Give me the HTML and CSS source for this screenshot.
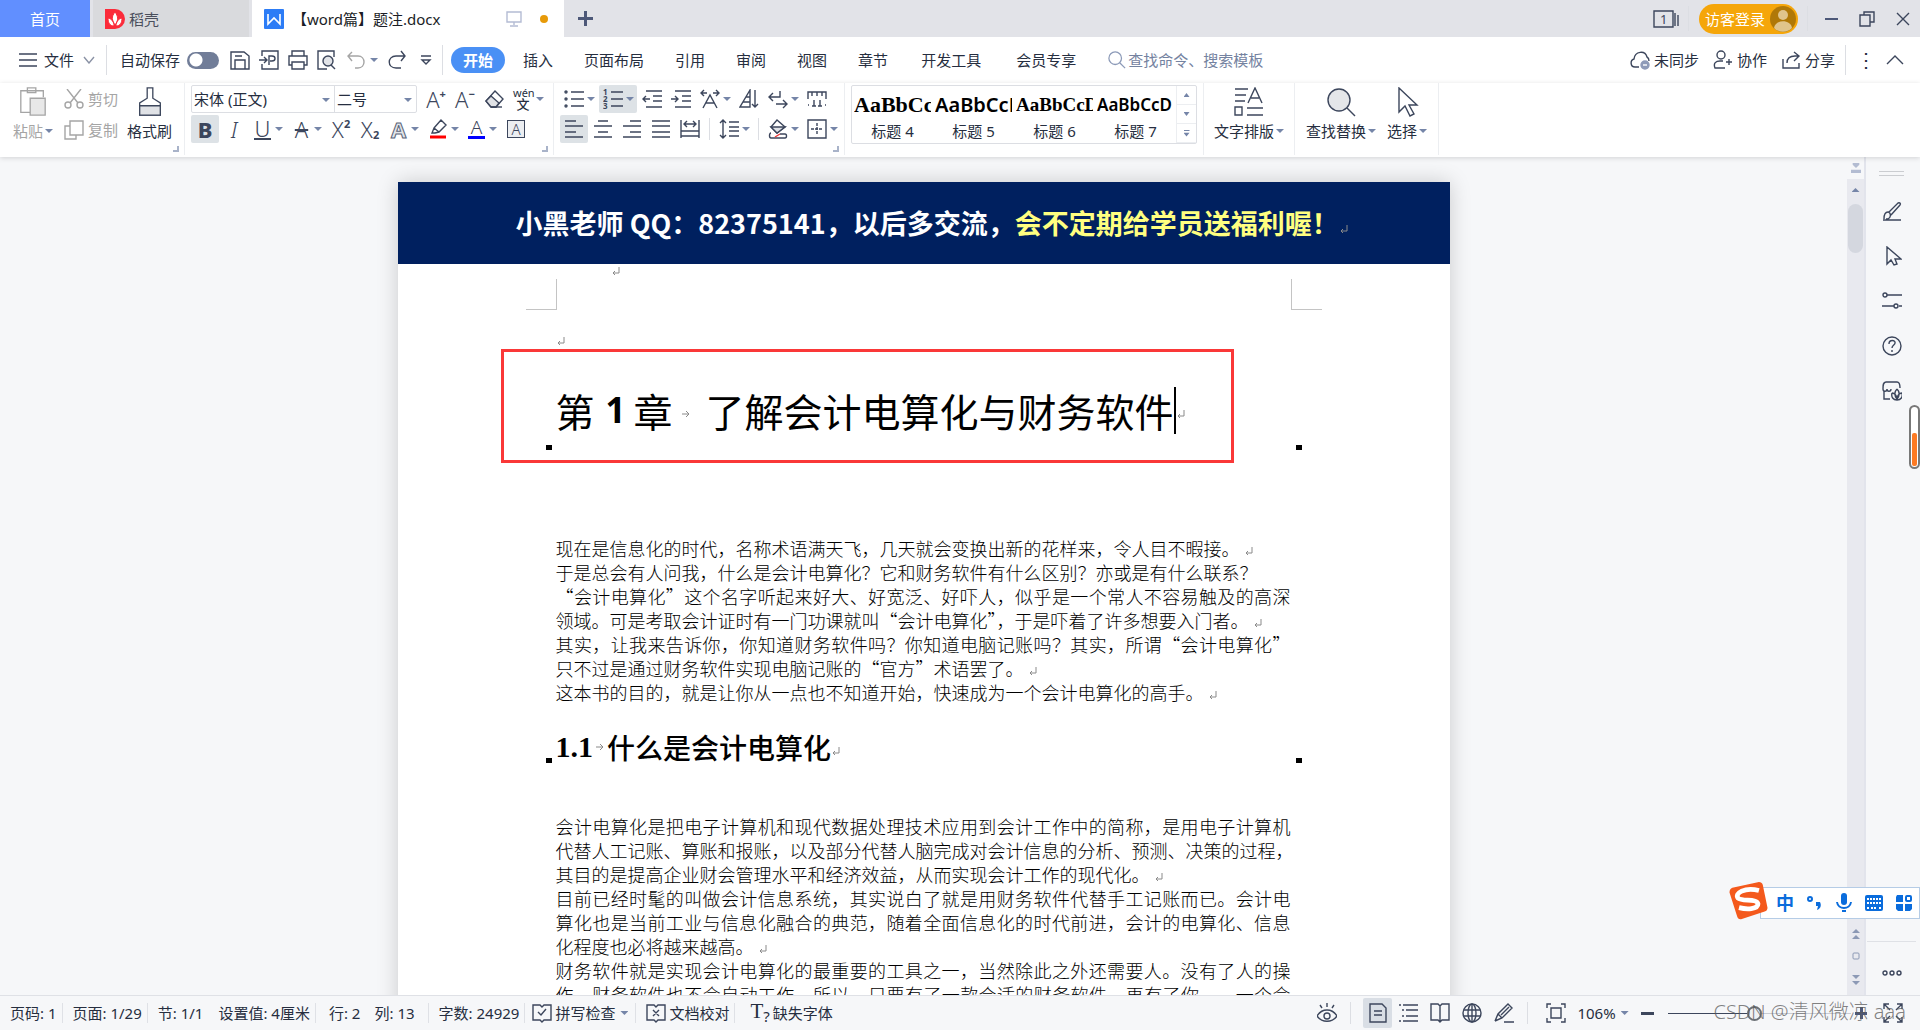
FILE: index.html
```html
<!DOCTYPE html>
<html lang="zh-CN">
<head>
    <meta charset="UTF-8">
    <meta name="viewport" content="width=device-width, initial-scale=1.0">
    <title>【word篇】题注.docx</title>
    <link rel="stylesheet" href="styles.css">
</head>
<body>
    <!-- Icon sprite -->
    <svg class="sprite" aria-hidden="true">
        <symbol id="i-menu" viewBox="0 0 20 20"><path d="M1 4h18M1 10h18M1 16h18"/></symbol>
        <symbol id="i-down" viewBox="0 0 12 8"><path d="M1 1l5 6 5-6"/></symbol>
        <symbol id="i-up" viewBox="0 0 18 12"><path d="M1 10l8-8 8 8"/></symbol>
        <symbol id="i-save" viewBox="0 0 20 20"><path d="M1 2h13l5 4v13H1zM5 19v-9h10v9M5 6h7"/></symbol>
        <symbol id="i-export" viewBox="0 0 20 20"><path d="M3 6V1h16v18H3v-5M0 10h8M5 7l3 3-3 3M10 15V6h3c4 0 4 5 0 5h-2"/></symbol>
        <symbol id="i-print" viewBox="0 0 20 20"><path d="M4 6V1h12v5M4 15H1V6h18v9h-3M4 12h12v7H4z"/></symbol>
        <symbol id="i-preview" viewBox="0 0 20 20"><path d="M17 7V1H1v18h9"/><circle cx="11" cy="11" r="5" fill="#e2e4e8"/><path d="M14 15l4 4"/></symbol>
        <symbol id="i-undo" viewBox="0 0 20 20"><path d="M6 2L2 6l4 5M2 6h10c8 0 8 12 0 12H9"/></symbol>
        <symbol id="i-redo" viewBox="0 0 20 20"><path d="M14 1l4 5-4 5M18 6H9c-9 0-9 12 0 12h5"/></symbol>
        <symbol id="i-more" viewBox="0 0 12 12"><path d="M1 2h10M2 6h8l-4 4z"/></symbol>
        <symbol id="i-search" viewBox="0 0 20 20"><circle cx="8" cy="8" r="7"/><path d="M13 13l6 6"/></symbol>
        <symbol id="i-cloud" viewBox="0 0 20 20"><path d="M9 17H5c-5 0-5-7-1-8 1-8 11-9 13-2 2 1 2 3 2 4"/><circle cx="15" cy="15" r="4" fill="#8f9bb8" stroke="#8f9bb8"/><path d="M13 15h4" stroke="#fff"/></symbol>
        <symbol id="i-team" viewBox="0 0 20 20"><circle cx="8" cy="5" r="4"/><path d="M12 18H2c-2-5 1-7 5-7h3M13 12h6M16 9v6"/></symbol>
        <symbol id="i-share" viewBox="0 0 20 20"><path d="M2 9v9h16v-5M6 13c0-5 3-7 8-7h3M13 2l5 4-5 5"/></symbol>
        <symbol id="i-paste" viewBox="0 0 30 32"><path d="M12 27H2V4h24v7M9 4V1h9v5H9z"/><path d="M12 12h16v18H12z" fill="#e8e8e8"/></symbol>
        <symbol id="i-cut" viewBox="0 0 20 20"><path d="M3 0l11 14M17 0L6 14"/><circle cx="4" cy="16" r="3"/><circle cx="16" cy="16" r="3"/></symbol>
        <symbol id="i-copy" viewBox="0 0 20 20"><path d="M6 6H1v13h11v-4M6 1h13v14H6z"/></symbol>
        <symbol id="i-brush" viewBox="0 0 26 32"><path d="M10 1h6v11l8 5v13H2V17l8-5z"/><path d="M2 20h22v10H2z" fill="#e0e2e6"/></symbol>
        <symbol id="i-eraser" viewBox="0 0 20 20"><path d="M11 2l8 8-7 8H7l-5-6z"/><path d="M7 7l8 7-3 4H7l-5-6z" fill="#e0e2e6"/><path d="M7 18h11"/></symbol>
        <symbol id="i-marker" viewBox="0 0 20 20"><path d="M6 9l7-8 5 5-7 7-4 1-3 0zM6 9l5 4"/><path d="M2 18h16" stroke="#f00" stroke-width="3"/></symbol>
        <symbol id="i-bullets" viewBox="0 0 20 20"><circle cx="2" cy="3" r="1"/><circle cx="2" cy="10" r="1"/><circle cx="2" cy="17" r="1"/><path d="M7 3h13M7 10h13M7 17h13"/></symbol>
        <symbol id="i-outdent" viewBox="0 0 20 20"><path d="M4 2h16M11 7h9M11 12h9M4 18h16M8 10H1M4 7l-3 3 3 3"/></symbol>
        <symbol id="i-indent" viewBox="0 0 20 20"><path d="M4 2h16M11 7h9M11 12h9M4 18h16M0 10h7M4 7l3 3-3 3"/></symbol>
        <symbol id="i-scale" viewBox="0 0 20 20"><path d="M7 4H1M4 1L1 4l3 3M13 4h6M16 1l3 3-3 3M3 19L10 6l7 13M6 14h8"/></symbol>
        <symbol id="i-sort" viewBox="0 0 20 20"><path d="M11 1L1 18h10zM11 8H7M11 13H4M16 1v17M13 15l3 3 3-3"/></symbol>
        <symbol id="i-return" viewBox="0 0 20 20"><path d="M12 2v6H1M5 4L1 8l4 4M8 15h11M15 11l4 4-4 4"/></symbol>
        <symbol id="i-ruler" viewBox="0 0 20 20"><path d="M1 10V3h18v7M5 3v4M10 3v4M15 3v4M1 16h1M18 16h1M7 11v6M5 17h4M13 11v6M11 17h4"/></symbol>
        <symbol id="i-left" viewBox="0 0 20 20"><path d="M1 2h11M1 7h18M1 13h11M1 18h18"/></symbol>
        <symbol id="i-center" viewBox="0 0 20 20"><path d="M5 2h10M1 7h18M5 13h10M1 18h18"/></symbol>
        <symbol id="i-right" viewBox="0 0 20 20"><path d="M8 2h11M1 7h18M8 13h11M1 18h18"/></symbol>
        <symbol id="i-justify" viewBox="0 0 20 20"><path d="M1 2h18M1 7h18M1 13h18M1 18h18"/></symbol>
        <symbol id="i-distribute" viewBox="0 0 20 20"><path d="M1 1v18M19 1v18M4 5h12M7 2L4 5l3 3M13 2l3 3-3 3M1 12h18M1 17h18"/></symbol>
        <symbol id="i-spacing" viewBox="0 0 20 20"><path d="M4 1v18M1 4l3-3 3 3M1 16l3 3 3-3M10 3h10M10 8h10M10 12h10M10 17h10"/></symbol>
        <symbol id="i-fill" viewBox="0 0 20 20"><path d="M3 8l6-7 8 7-8 6z"/><path d="M3 8h14l-8 6z" fill="#dfe2e7"/><path d="M3 14c-2 0-2 5 0 5h14c2 0 2-4 0-4h-5"/><path d="M7 18l5-3" stroke="#e33"/></symbol>
        <symbol id="i-border" viewBox="0 0 20 20"><path d="M1 1h18v18H1z"/><path d="M10 4v12M4 10h12" stroke-dasharray="3 1"/></symbol>
        <symbol id="i-layout" viewBox="0 0 30 30"><path d="M1 2h13M1 8h11M1 14h10M1 20h7v8H1zM13 21h16M13 28h16M14 16l7-15 7 15M17 11h8"/></symbol>
        <symbol id="i-find" viewBox="0 0 30 30"><circle cx="13" cy="13" r="11" fill="#e4e6e9"/><path d="M21 21l8 8"/></symbol>
        <symbol id="i-select" viewBox="0 0 30 30"><path d="M7 1v24l6-6 5 10 4-2-5-9h8z"/></symbol>
        <symbol id="i-restore" viewBox="0 0 16 16"><path d="M5 4V1h10v10h-4M1 4h10v11H1z"/></symbol>
        <symbol id="i-close" viewBox="0 0 14 14"><path d="M1 1l12 12M13 1L1 13"/></symbol>
        <symbol id="i-screen" viewBox="0 0 16 16"><path d="M1 1h14v10H1zM8 11v3M4 15h8"/></symbol>
        <symbol id="i-pen" viewBox="0 0 20 20"><path d="M1 19h18M2 18c0-5 1-7 4-7s4 7-2 7M7 11l9-9c2-1 3 1 2 2l-9 10"/></symbol>
        <symbol id="i-pointer" viewBox="0 0 20 20"><path d="M5 1v17l4-4 3 5 3-1-2-5h6z"/></symbol>
        <symbol id="i-sliders" viewBox="0 0 20 20"><circle cx="3" cy="4" r="2"/><path d="M5 4h15M0 15h12M17 15h3"/><circle cx="14" cy="15" r="2"/></symbol>
        <symbol id="i-help" viewBox="0 0 20 20"><circle cx="10" cy="10" r="9"/><path d="M7 8c0-5 7-4 6-1 0 2-3 2-3 5M10 14v2"/></symbol>
        <symbol id="i-shop" viewBox="0 0 20 20"><path d="M2 10v8h6M18 7c0-4-1-6-3-6H4C1 1 1 4 1 8M1 8c0 3 4 3 4 0 0 3 4 3 4 0M15 8c-3 3-3 6 0 10 3-4 3-7 0-10M10 12c-1 4 1 7 5 7s6-3 5-7c-3 0-5 3-5 6 0-3-2-6-5-6"/></symbol>
        <symbol id="i-dots" viewBox="0 0 20 6"><circle cx="3" cy="3" r="2"/><circle cx="10" cy="3" r="2"/><circle cx="17" cy="3" r="2"/></symbol>
        <symbol id="i-spell" viewBox="0 0 20 20"><path d="M8 2H1v15h7l2 2 2-2h7V2h-7l-2 2zM6 9l3 3 5-6"/></symbol>
        <symbol id="i-proof" viewBox="0 0 20 20"><path d="M8 2H1v15h7l2 2 2-2h7V2h-7l-2 2zM7 7l6 6M13 7l-6 6"/></symbol>
        <symbol id="i-eye" viewBox="0 0 20 20"><path d="M0 13c5-8 15-8 20 0-5 7-15 7-20 0M10 0v4M3 2l2 3M17 2l-2 3"/><circle cx="10" cy="13" r="3"/></symbol>
        <symbol id="i-page" viewBox="0 0 20 20"><path d="M2 1h12l4 4v14H2zM6 8h8M6 12h8"/></symbol>
        <symbol id="i-outline" viewBox="0 0 20 20"><path d="M1 2h2M5 2h15M4 7h2M8 7h12M4 13h2M8 13h12M1 18h2M5 18h15"/></symbol>
        <symbol id="i-book" viewBox="0 0 20 20"><path d="M10 3l-2-2H1v16h7l2 2 2-2h7V1h-7zM10 3v15"/></symbol>
        <symbol id="i-globe" viewBox="0 0 20 20"><circle cx="10" cy="10" r="9"/><ellipse cx="10" cy="10" rx="4" ry="9"/><path d="M10 1v18M2 7h16M2 13h16"/></symbol>
        <symbol id="i-write" viewBox="0 0 20 20"><path d="M1 18l3-7L14 1l4 4L8 15l-7 3M4 11l4 4M7 12l8-8M10 19h10"/></symbol>
        <symbol id="i-fit" viewBox="0 0 20 20"><path d="M1 5V1h4M15 1h4v4M19 15v4h-4M5 19H1v-4M5 5h10v10H5z"/></symbol>
        <symbol id="i-full" viewBox="0 0 20 20"><path d="M1 6V1h5M14 1h5v5M19 14v5h-5M6 19H1v-5M1 1l6 6M19 1l-6 6M1 19l6-6M19 19l-6-6"/></symbol>
        <symbol id="i-mark" viewBox="0 0 10 10"><path d="M8 1v6H2M4 5L2 7l2 2"/></symbol>
        <symbol id="i-tab" viewBox="0 0 10 10"><path d="M1 5h7M5 2l3 3-3 3"/></symbol>
    </svg>

    <header class="titlebar">
        <button class="tab home">首页</button>
        <button class="tab docer">
            <svg class="logo" viewBox="0 0 20 20"><path d="M0 0h10a10 10 0 0 1 0 20H0z" fill="#fb2b3a"/><path d="M10 3c-4 5-3 8 0 13 4-5 3-9 0-13M3 9c0 5 2 8 6 8 0-4-2-7-6-8M17 9c0 5-2 8-6 8 0-4 2-7 6-8" fill="#fff" stroke="#fb2b3a"/></svg>
            稻壳
        </button>
        <button class="tab current">
            <svg class="logo" viewBox="0 0 20 20"><rect width="20" height="20" rx="1" fill="#2c7cf6"/><path d="M4 5v10l6-6 6 6V5" fill="none" stroke="#fff" stroke-width="1.6"/></svg>
            <span class="tab-name">【word篇】题注.docx</span>
            <svg class="icon small faint"><use href="#i-screen"/></svg>
            <span class="unsaved"></span>
        </button>
        <button class="add" aria-label="新建"></button>
        <div class="window-tools">
            <svg class="icon windows" viewBox="0 0 26 18"><path d="M1 1h19v16H1zM22 3v13M25 5v11"/><text x="7" y="14" class="num">1</text></svg>
            <span class="sep"></span>
            <button class="login">访客登录
                <svg class="avatar" viewBox="0 0 26 26"><circle cx="13" cy="13" r="13" fill="#b07807"/><circle cx="13" cy="9" r="5" fill="#e0c48c"/><path d="M4 22c1-9 17-9 18 0-5 5-13 5-18 0" fill="#e0c48c"/></svg>
            </button>
            <span class="sep"></span>
            <button class="win minimize" aria-label="最小化"></button>
            <button class="win" aria-label="还原"><svg class="icon small"><use href="#i-restore"/></svg></button>
            <button class="win" aria-label="关闭"><svg class="icon close"><use href="#i-close"/></svg></button>
        </div>
    </header>

    <nav class="menubar">
        <button class="file"><svg class="icon"><use href="#i-menu"/></svg>文件<svg class="icon chevron"><use href="#i-down"/></svg></button>
        <span class="sep"></span>
        <label class="autosave">自动保存<input type="checkbox"></label>
        <div class="quick">
            <button aria-label="保存"><svg class="icon"><use href="#i-save"/></svg></button>
            <button aria-label="输出"><svg class="icon"><use href="#i-export"/></svg></button>
            <button aria-label="打印"><svg class="icon"><use href="#i-print"/></svg></button>
            <button aria-label="预览"><svg class="icon"><use href="#i-preview"/></svg></button>
            <button class="disabled" aria-label="撤销"><svg class="icon"><use href="#i-undo"/></svg><i class="caret"></i></button>
            <button aria-label="恢复"><svg class="icon"><use href="#i-redo"/></svg></button>
            <button aria-label="更多"><svg class="icon more"><use href="#i-more"/></svg></button>
        </div>
        <span class="sep"></span>
        <div class="menus">
            <button class="active">开始</button>
            <button>插入</button>
            <button>页面布局</button>
            <button>引用</button>
            <button>审阅</button>
            <button>视图</button>
            <button>章节</button>
            <button class="wide">开发工具</button>
            <button class="wide">会员专享</button>
        </div>
        <label class="search"><svg class="icon"><use href="#i-search"/></svg><input type="text" placeholder="查找命令、搜索模板" aria-label="搜索"></label>
        <div class="share-tools">
            <button><svg class="icon"><use href="#i-cloud"/></svg>未同步</button>
            <button><svg class="icon"><use href="#i-team"/></svg>协作</button>
            <button><svg class="icon"><use href="#i-share"/></svg>分享</button>
            <span class="sep"></span>
            <button class="kebab" aria-label="更多选项">⋮</button>
            <button aria-label="收起"><svg class="icon collapse"><use href="#i-up"/></svg></button>
        </div>
    </nav>

    <section class="ribbon">
        <div class="group clipboard">
            <button class="big disabled"><svg class="icon large"><use href="#i-paste"/></svg><span>粘贴<i class="caret"></i></span></button>
            <div class="stack">
                <button class="inline disabled"><svg class="icon"><use href="#i-cut"/></svg>剪切</button>
                <button class="inline disabled"><svg class="icon"><use href="#i-copy"/></svg>复制</button>
            </div>
            <button class="big"><svg class="icon large"><use href="#i-brush"/></svg><span>格式刷</span></button>
            <i class="corner"></i>
        </div>
        <div class="group font">
            <div class="row">
                <div class="selects">
                    <span class="pick family"><select aria-label="字体"><option>宋体 (正文)</option></select><i class="caret"></i></span>
                    <span class="pick size"><select aria-label="字号"><option>二号</option></select><i class="caret"></i></span>
                </div>
                <button class="tool glyph">A<sup>+</sup></button>
                <button class="tool glyph">A<sup>−</sup></button>
                <button class="tool" aria-label="清除格式"><svg class="icon"><use href="#i-eraser"/></svg></button>
                <button class="tool drop pinyin"><span>wén<b>文</b></span><i class="caret"></i></button>
            </div>
            <div class="row">
                <button class="tool glyph bold on">B</button>
                <button class="tool glyph italic">I</button>
                <button class="tool glyph drop"><span class="underline">U</span><i class="caret"></i></button>
                <button class="tool glyph drop"><span class="strike">A</span><i class="caret"></i></button>
                <button class="tool glyph">X<sup>2</sup></button>
                <button class="tool glyph">X<sub>2</sub></button>
                <button class="tool glyph drop"><span class="outlined">A</span><i class="caret"></i></button>
                <button class="tool drop" aria-label="突出显示"><svg class="icon"><use href="#i-marker"/></svg><i class="caret"></i></button>
                <button class="tool glyph drop"><span class="color">A</span><i class="caret"></i></button>
                <button class="tool glyph"><span class="boxed">A</span></button>
            </div>
            <i class="corner"></i>
        </div>
        <div class="group paragraph">
            <div class="row">
                <button class="tool drop" aria-label="项目符号"><svg class="icon"><use href="#i-bullets"/></svg><i class="caret"></i></button>
                <button class="tool drop on" aria-label="编号"><svg class="icon" viewBox="0 0 20 20"><path d="M8 3h12M8 10h12M8 17h12"/><text x="0" y="6" class="tiny">1</text><text x="0" y="13" class="tiny">2</text><text x="0" y="20" class="tiny">3</text></svg><i class="caret"></i></button>
                <button class="tool" aria-label="减少缩进"><svg class="icon"><use href="#i-outdent"/></svg></button>
                <button class="tool" aria-label="增加缩进"><svg class="icon"><use href="#i-indent"/></svg></button>
                <button class="tool drop" aria-label="中文版式"><svg class="icon"><use href="#i-scale"/></svg><i class="caret"></i></button>
                <button class="tool" aria-label="排序"><svg class="icon"><use href="#i-sort"/></svg></button>
                <button class="tool drop" aria-label="段落标记"><svg class="icon"><use href="#i-return"/></svg><i class="caret"></i></button>
                <button class="tool" aria-label="制表位"><svg class="icon"><use href="#i-ruler"/></svg></button>
            </div>
            <div class="row">
                <button class="tool on" aria-label="左对齐"><svg class="icon"><use href="#i-left"/></svg></button>
                <button class="tool" aria-label="居中"><svg class="icon"><use href="#i-center"/></svg></button>
                <button class="tool" aria-label="右对齐"><svg class="icon"><use href="#i-right"/></svg></button>
                <button class="tool" aria-label="两端对齐"><svg class="icon"><use href="#i-justify"/></svg></button>
                <button class="tool" aria-label="分散对齐"><svg class="icon"><use href="#i-distribute"/></svg></button>
                <span class="sep"></span>
                <button class="tool drop" aria-label="行距"><svg class="icon"><use href="#i-spacing"/></svg><i class="caret"></i></button>
                <span class="sep"></span>
                <button class="tool drop" aria-label="底纹"><svg class="icon"><use href="#i-fill"/></svg><i class="caret"></i></button>
                <button class="tool drop" aria-label="边框"><svg class="icon"><use href="#i-border"/></svg><i class="caret"></i></button>
            </div>
            <i class="corner"></i>
        </div>
        <div class="group">
            <div class="styles">
                <button><span class="sample serif">AaBbCcDd</span>标题 4</button>
                <button><span class="sample">AaBbCcDd</span>标题 5</button>
                <button><span class="sample serif less">AaBbCcDd</span>标题 6</button>
                <button><span class="sample less">AaBbCcD</span>标题 7</button>
                <div class="style-scroll">
                    <button aria-label="上"><i class="caret up"></i></button>
                    <button aria-label="下"><i class="caret"></i></button>
                    <button aria-label="展开"><i class="caret lined"></i></button>
                </div>
            </div>
        </div>
        <div class="group layout">
            <button class="big"><svg class="icon large"><use href="#i-layout"/></svg><span>文字排版<i class="caret"></i></span></button>
        </div>
        <div class="group edit">
            <button class="big"><svg class="icon large"><use href="#i-find"/></svg><span>查找替换<i class="caret"></i></span></button>
            <button class="big"><svg class="icon large"><use href="#i-select"/></svg><span>选择<i class="caret"></i></span></button>
        </div>
    </section>

    <main class="workspace">
        <div class="canvas">
            <article class="page">
                <header class="banner">小黑老师 QQ：82375141，以后多交流，<em>会不定期给学员送福利喔！</em><svg class="mark"><use href="#i-mark"/></svg></header>
                <div class="header-mark"><svg class="mark"><use href="#i-mark"/></svg></div>
                <div class="crop-marks"><i></i><i></i></div>
                <div class="text">
                    <div class="empty"><svg class="mark"><use href="#i-mark"/></svg></div>
                    <h1>第<b>1</b>章<svg class="mark tabstop"><use href="#i-tab"/></svg>了解会计电算化与财务软件<i class="cursor"></i><svg class="mark"><use href="#i-mark"/></svg></h1>
                    <div class="body">
                        <p>现在是信息化的时代，名称术语满天飞，几天就会变换出新的花样来，令人目不暇接。<svg class="mark"><use href="#i-mark"/></svg></p>
                        <p>于是总会有人问我，什么是会计电算化？它和财务软件有什么区别？亦或是有什么联系？</p>
                        <p class="full">“会计电算化”这个名字听起来好大、好宽泛、好吓人，似乎是一个常人不容易触及的高深</p>
                        <p>领域。可是考取会计证时有一门功课就叫“会计电算化”，于是吓着了许多想要入门者。<svg class="mark"><use href="#i-mark"/></svg></p>
                        <p class="full">其实，让我来告诉你，你知道财务软件吗？你知道电脑记账吗？其实，所谓“会计电算化”</p>
                        <p>只不过是通过财务软件实现电脑记账的“官方”术语罢了。<svg class="mark"><use href="#i-mark"/></svg></p>
                        <p>这本书的目的，就是让你从一点也不知道开始，快速成为一个会计电算化的高手。<svg class="mark"><use href="#i-mark"/></svg></p>
                    </div>
                    <h2><b>1.1</b><svg class="mark"><use href="#i-tab"/></svg>什么是会计电算化<svg class="mark"><use href="#i-mark"/></svg></h2>
                    <div class="body">
                        <p class="full">会计电算化是把电子计算机和现代数据处理技术应用到会计工作中的简称，是用电子计算机</p>
                        <p class="full">代替人工记账、算账和报账，以及部分代替人脑完成对会计信息的分析、预测、决策的过程，</p>
                        <p>其目的是提高企业财会管理水平和经济效益，从而实现会计工作的现代化。<svg class="mark"><use href="#i-mark"/></svg></p>
                        <p class="full">目前已经时髦的叫做会计信息系统，其实说白了就是用财务软件代替手工记账而已。会计电</p>
                        <p class="full">算化也是当前工业与信息化融合的典范，随着全面信息化的时代前进，会计的电算化、信息</p>
                        <p>化程度也必将越来越高。<svg class="mark"><use href="#i-mark"/></svg></p>
                        <p class="full">财务软件就是实现会计电算化的最重要的工具之一，当然除此之外还需要人。没有了人的操</p>
                        <p class="full">作，财务软件也不会自动工作，所以，只要有了一款合适的财务软件，再有了你——一个会</p>
                    </div>
                </div>
                <div class="callout"></div>
            </article>
        </div>
        <div class="scrollbar">
            <svg class="ruler-toggle" viewBox="0 0 12 12"><path d="M2 0h8v2L6 6 2 2zM0 8h12v4H0z"/></svg>
            <div class="track">
                <i class="caret up"></i>
                <span class="thumb"></span>
                <svg class="pager" viewBox="0 0 10 56"><path d="M5 0l4 4H1zM5 6l4 4H1zM1 46h8l-4 4zM1 52h8l-4 4z"/><rect x="2" y="24" width="6" height="6" rx="1" fill="none" stroke="#8c99b5"/></svg>
            </div>
        </div>
        <aside class="sidebar">
            <span class="grip"></span>
            <button aria-label="样式"><svg class="icon"><use href="#i-pen"/></svg></button>
            <button aria-label="选择窗格"><svg class="icon"><use href="#i-pointer"/></svg></button>
            <button aria-label="属性"><svg class="icon"><use href="#i-sliders"/></svg></button>
            <button aria-label="帮助"><svg class="icon"><use href="#i-help"/></svg></button>
            <button aria-label="稻壳资源"><svg class="icon"><use href="#i-shop"/></svg></button>
            <button class="last" aria-label="更多"><svg class="icon dots"><use href="#i-dots"/></svg></button>
        </aside>
    </main>

    <footer class="statusbar">
        <span class="cell">页码: 1</span>
        <span class="cell">页面: 1/29</span>
        <span class="cell two"><span>节: 1/1</span><span>设置值: 4厘米</span></span>
        <span class="cell lines"><span>行: 2</span><span>列: 13</span></span>
        <span class="cell">字数: 24929</span>
        <button class="cell check"><svg class="icon"><use href="#i-spell"/></svg>拼写检查<i class="caret"></i></button>
        <button class="cell"><svg class="icon"><use href="#i-proof"/></svg>文档校对</button>
        <button class="cell missing"><span class="tq">T<small>?</small></span>缺失字体</button>
        <div class="views">
            <button aria-label="护眼模式"><svg class="icon"><use href="#i-eye"/></svg></button>
            <span class="sep"></span>
            <button class="on" aria-label="页面视图"><svg class="icon"><use href="#i-page"/></svg></button>
            <button aria-label="大纲"><svg class="icon"><use href="#i-outline"/></svg></button>
            <button aria-label="阅读版式"><svg class="icon"><use href="#i-book"/></svg></button>
            <button aria-label="Web版式"><svg class="icon"><use href="#i-globe"/></svg></button>
            <button aria-label="写作模式"><svg class="icon"><use href="#i-write"/></svg></button>
            <span class="sep"></span>
            <button aria-label="最佳显示比例"><svg class="icon"><use href="#i-fit"/></svg></button>
            <button class="percent">106%<i class="caret"></i></button>
            <button class="minus" aria-label="缩小"></button>
            <input type="range" min="0" max="100" value="47" aria-label="缩放">
            <button class="plus" aria-label="放大"></button>
            <button aria-label="全屏"><svg class="icon"><use href="#i-full"/></svg></button>
        </div>
    </footer>

    <!-- Things floating over the window -->
    <div class="gauge"><span></span></div>
    <div class="ime">
        <svg class="ime-logo" viewBox="0 0 40 40"><path d="M3 6l28-6q3 0 4 3l5 24q0 3-3 4L13 39q-4 1-5-3L0 11q0-4 3-5" fill="#f4591c"/><path d="M31 9C16 5 5 12 9 17c4 4 20 0 21 6 0 6-12 6-20 4" fill="none" stroke="#fff" stroke-width="5"/></svg>
        <span class="zh">中</span>
        <svg viewBox="0 0 20 20"><circle cx="6" cy="6" r="2" fill="none" stroke="#0a6cdc" stroke-width="2"/><path d="M12 9h4c2 4 0 7-3 8l1-4h-2z"/></svg>
        <svg viewBox="0 0 20 20"><rect x="7" y="0" width="6" height="12" rx="3"/><path d="M3 9c1 8 13 8 14 0" fill="none" stroke="#0a6cdc" stroke-width="2"/><path d="M8 17h4v2H8z"/></svg>
        <svg viewBox="0 0 20 20"><rect x="1" y="2" width="18" height="16" rx="2"/><path d="M3 6h14M3 10h14M3 15h2M7 15h6M15 15h2" stroke="#fff" stroke-width="2" stroke-dasharray="2 1"/></svg>
        <svg viewBox="0 0 20 20"><path d="M3 2h6v7H2V4zM2 11h7v7H4l-2-2zM11 11h7v5l-2 2h-5z"/><rect x="12" y="3" width="5" height="5" rx="1" fill="none" stroke="#0a6cdc" stroke-width="2"/></svg>
    </div>
    <div class="watermark">CSDN @清风微凉 aaa</div>
</body>
</html>
```
FILE: styles.css
```css
* {
    box-sizing: border-box;
    margin: 0;
    padding: 0;
}
body {
    height: 100vh;
    display: flex;
    flex-direction: column;
    overflow: hidden;
    font-family: 'Noto Sans', 'Noto Sans CJK SC', sans-serif;
    font-size: 15px;
    line-height: 20px;
    color: #262e40;
    background-color: #fff;
}
button, input, select {
    font: inherit;
    color: inherit;
    background: none;
    border: none;
}
button {
    display: flex;
    align-items: center;
    flex-shrink: 0;
    white-space: nowrap;
}
.sprite {
    position: absolute;
    width: 0;
    height: 0;
}
.icon {
    width: 20px;
    height: 20px;
    flex-shrink: 0;
    fill: none;
    stroke: currentColor;
    stroke-width: 1.4;
    color: #3c465c;
}
.icon.small {
    width: 16px;
    height: 16px;
}
.icon.faint {
    color: #b4bcd4;
}
.icon.large {
    width: 30px;
    height: 30px;
}
.disabled, .disabled .icon {
    color: #a5a5a5;
}
.tiny {
    font-size: 8px;
    font-weight: bold;
    fill: currentColor;
    stroke: none;
}
.num {
    font-size: 13px;
    fill: currentColor;
    stroke: none;
}
.caret {
    width: 8px;
    height: 4px;
    flex-shrink: 0;
    background-color: #7585a8;
    clip-path: polygon(0 0, 100% 0, 50% 100%);
}
.caret.up {
    clip-path: polygon(50% 0, 100% 100%, 0 100%);
}
.caret.lined {
    height: 7px;
    clip-path: polygon(0 0, 100% 0, 100% 20%, 0 20%, 0 45%, 100% 45%, 50% 100%, 0 45%);
}
.sep {
    width: 1px;
    flex-shrink: 0;
    background-color: #dcdee3;
}

/* Title bar */
.titlebar {
    display: flex;
    height: 37px;
    flex-shrink: 0;
    background-color: #e2e3e8;
}
.tab {
    padding: 0 12px;
    gap: 4px;
}
.tab.home {
    width: 90px;
    justify-content: center;
    color: #fff;
    background-color: #618fff;
}
.tab.docer {
    width: 156px;
    margin: 0 3px;
    color: #4a4f5c;
    background-color: #d9dadd;
}
.tab.current {
    width: 312px;
    gap: 8px;
    background-color: #fff;
    color: #1a1d26;
}
.logo {
    width: 20px;
    height: 20px;
}
.tab-name {
    flex: 1;
    text-align: left;
}
.unsaved {
    width: 8px;
    height: 8px;
    margin: 0 4px 0 10px;
    border-radius: 50%;
    background-color: #e79a09;
}
.add, .plus {
    width: 15px;
    height: 15px;
    margin: 11px 14px;
    background: linear-gradient(#4d5878, #4d5878) center / 100% 3px no-repeat, linear-gradient(#4d5878, #4d5878) center / 3px 100% no-repeat;
}
.window-tools {
    display: flex;
    align-items: center;
    gap: 10px;
    margin-left: auto;
    padding-right: 4px;
}
.window-tools .sep {
    height: 25px;
    margin-left: -1px;
}
.icon.windows {
    width: 26px;
    height: 18px;
}
.login {
    height: 30px;
    padding: 0 2px 0 6px;
    gap: 5px;
    border-radius: 15px;
    color: #fff;
    background-color: #f5a60a;
}
.avatar {
    width: 26px;
    height: 26px;
}
.win {
    width: 26px;
    height: 26px;
    justify-content: center;
}
.icon.close {
    width: 14px;
    height: 14px;
}
.minimize {
    background: linear-gradient(#4d5878, #4d5878) center / 13px 2px no-repeat;
}

/* Menu bar */
.menubar {
    display: flex;
    align-items: center;
    height: 46px;
    flex-shrink: 0;
    padding: 0 16px 0 18px;
}
.menubar .sep {
    height: 30px;
}
.file {
    gap: 6px;
    margin-right: 11px;
}
.icon.chevron {
    width: 12px;
    height: 8px;
    margin-left: 3px;
    color: #8a92a5;
}
.autosave {
    display: flex;
    align-items: center;
    gap: 7px;
    margin: 0 11px 0 13px;
}
.autosave input {
    appearance: none;
    width: 32px;
    height: 17px;
    border-radius: 9px;
    background: radial-gradient(circle at 9px 8px, #fff 6px, #717d98 7px);
}
.quick {
    display: flex;
    gap: 9px;
}
.quick .caret {
    margin-left: 4px;
}
.icon.more {
    width: 12px;
    height: 12px;
    margin: 0 10px 0 4px;
}
.menus {
    display: flex;
    align-items: center;
    gap: 1px;
    margin-left: 8px;
}
.menus button {
    height: 26px;
    padding: 0 15px;
}
.menus .wide {
    padding: 0 17px;
}
.menus .active {
    width: 54px;
    margin-right: 2px;
    padding: 0 12px;
    border-radius: 13px;
    font-weight: bold;
    color: #fff;
    background-color: #4a90f5;
}
.search {
    display: flex;
    align-items: center;
    margin-left: 15px;
    color: #7482a0;
}
.search .icon {
    width: 18px;
    height: 18px;
    color: #8c9ab8;
}
.search input {
    width: 160px;
    padding-left: 2px;
}
.search input::placeholder {
    color: inherit;
}
.share-tools {
    display: flex;
    align-items: center;
    gap: 14px;
    margin-left: auto;
}
.share-tools button {
    gap: 4px;
}
.share-tools .sep {
    margin-left: -4px;
}
.kebab {
    width: 12px;
    justify-content: center;
    font-size: 20px;
}
.icon.collapse {
    width: 18px;
    height: 12px;
}

/* Ribbon */
.ribbon {
    display: flex;
    height: 74px;
    flex-shrink: 0;
    position: relative;
    z-index: 2;
    background-color: #fff;
    box-shadow: 0 1px 5px rgba(0, 0, 0, 0.15);
}
.group {
    position: relative;
    height: 72px;
    padding: 2px 6px 0;
    border-right: 1px solid #eceef1;
}
.corner {
    position: absolute;
    right: 5px;
    bottom: 3px;
    width: 6px;
    height: 6px;
    border-right: 2px solid #a9b3c9;
    border-bottom: 2px solid #a9b3c9;
}
.clipboard, .layout, .edit {
    display: flex;
    align-items: flex-start;
}
.clipboard {
    width: 185px;
    padding-left: 13px;
}
.big {
    flex-direction: column;
    gap: 4px;
    padding-top: 2px;
}
.big span {
    display: flex;
    align-items: center;
    gap: 2px;
}
.stack {
    display: flex;
    flex-direction: column;
    gap: 7px;
    margin: 2px 9px 0 11px;
}
.inline {
    height: 24px;
    gap: 4px;
}
.font {
    width: 369px;
}
.paragraph {
    width: 291px;
}
.row {
    display: flex;
    align-items: center;
    gap: 1px;
    height: 28px;
    margin-bottom: 2px;
}
.row .sep {
    height: 22px;
    margin: 0 4px;
}
.tool {
    width: 28px;
    height: 28px;
    padding: 0 4px;
    border-radius: 2px;
}
.tool.drop {
    width: 38px;
    gap: 3px;
}
.tool.on {
    background-color: #dde2e6;
}
.selects {
    display: flex;
    width: 230px;
    height: 28px;
    margin-right: 4px;
    border: 1px solid #dcdee3;
    border-radius: 2px;
}
.pick {
    position: relative;
    flex: 1;
}
.pick.family {
    flex: none;
    width: 143px;
    border-right: 1px solid #dcdee3;
}
.pick select {
    appearance: none;
    width: 100%;
    height: 26px;
    padding-left: 2px;
}
.pick .caret {
    position: absolute;
    right: 4px;
    top: 12px;
}
.glyph {
    justify-content: center;
    font-size: 22px;
    font-weight: 300;
    line-height: 24px;
    color: #3c465c;
}
.glyph span {
    width: 20px;
    text-align: center;
}
.glyph sup, .glyph sub {
    font-size: 11px;
    font-weight: bold;
    line-height: 10px;
}
.glyph sup {
    align-self: flex-start;
    margin-top: 4px;
}
.glyph sub {
    align-self: flex-end;
    margin-bottom: 3px;
}
.glyph.bold {
    font-weight: 800;
}
.glyph.italic {
    font-style: italic;
}
.underline, .color {
    height: 22px;
    line-height: 20px;
    border-bottom: 2px solid #3c465c;
}
.color {
    height: 20px;
    font-size: 19px;
    line-height: 16px;
    border-bottom: 3px solid #00f;
}
.glyph .underline, .glyph .color {
    width: 18px;
    margin: 0 1px;
}
.strike {
    text-decoration: line-through;
}
.outlined {
    color: #e2e4e8;
    font-weight: bold;
    -webkit-text-stroke: 1px #5a6478;
}
.glyph .boxed {
    width: 18px;
    height: 18px;
    flex-shrink: 0;
    border: 1px solid #3c465c;
    background-color: #eceef1;
    font-size: 15px;
    line-height: 16px;
}
.pinyin span {
    width: 20px;
    font-size: 11px;
    line-height: 10px;
    text-align: center;
}
.pinyin b {
    display: block;
    font-size: 13px;
    font-weight: 500;
    line-height: 12px;
}
.styles {
    display: flex;
    width: 346px;
    height: 59px;
    border: 1px solid #dcdee3;
    border-radius: 2px;
}
.styles > button {
    width: 81px;
    flex-direction: column;
    padding-top: 6px;
}
.sample {
    width: 77px;
    height: 26px;
    margin-bottom: 3px;
    overflow: hidden;
    text-align: left;
    font-size: 20px;
    line-height: 26px;
    font-weight: 600;
    color: #000;
}
.sample.less {
    font-size: 17px;
}
.sample.serif {
    font-family: 'Liberation Serif', serif;
    font-size: 22px;
    font-weight: bold;
}
.sample.serif.less {
    font-size: 19px;
}
.style-scroll {
    flex: 1;
    display: flex;
    flex-direction: column;
    border-left: 1px solid #eceef1;
}
.style-scroll button {
    flex: 1;
    justify-content: center;
    border-bottom: 1px solid #eceef1;
}
.style-scroll .caret {
    width: 6px;
}
.layout {
    width: 91px;
    padding-left: 10px;
}
.edit {
    width: 144px;
    gap: 11px;
    padding-left: 11px;
}

/* Document area */
.workspace {
    flex: 1;
    min-height: 0;
    display: flex;
    background-color: #f6f7f9;
}
.canvas {
    flex: 1;
    overflow: hidden;
    padding-top: 25px;
}
.page {
    position: relative;
    width: 1052px;
    min-height: 1488px;
    margin: 0 auto;
    background-color: #fff;
    box-shadow: 0 0 20px rgba(0, 0, 0, 0.18);
    font-family: 'Noto Sans CJK SC', sans-serif;
    color: #000;
    white-space: nowrap;
}
.mark {
    width: 10px;
    height: 10px;
    fill: none;
    stroke: #8a8a8a;
}
.banner {
    height: 82px;
    padding-left: 118px;
    font-size: 27px;
    font-weight: bold;
    line-height: 82px;
    color: #fff;
    background-color: #00205f;
}
.banner em {
    font-style: normal;
    color: #ffff80;
}
.header-mark {
    height: 15px;
    padding: 1px 0 0 213px;
    line-height: 10px;
}
.crop-marks {
    display: flex;
    justify-content: space-between;
    height: 31px;
    padding: 0 128px;
}
.crop-marks i {
    width: 31px;
    border: solid #c4c4c4;
    border-width: 0 1px 1px 0;
}
.crop-marks i:last-child {
    border-width: 0 0 1px 1px;
}
.text {
    width: 735px;
    margin-left: 158px;
}
.empty {
    height: 72px;
    padding-top: 25px;
    line-height: 10px;
}
h1, h2 {
    position: relative;
    display: flex;
    align-items: center;
    font-weight: normal;
}
h1::before, h1::after, h2::before, h2::after {
    content: '';
    position: absolute;
    bottom: 0;
    width: 6px;
    height: 5px;
    background-color: #000;
}
h1::before, h2::before {
    left: -10px;
}
h1::after, h2::after {
    right: -11px;
}
h1 {
    height: 68px;
    margin-bottom: 86px;
    padding-bottom: 12px;
    font-size: 39px;
    line-height: 56px;
}
h1 b {
    margin: 0 8px 0 11px;
    font-family: 'Noto Sans', sans-serif;
    font-size: 35px;
}
h1 .tabstop {
    margin: 4px 15px 0 8px;
}
.cursor {
    width: 2px;
    height: 47px;
    background-color: #000;
}
h1 .mark, h2 .mark {
    margin-top: 8px;
}
h2 {
    height: 32px;
    margin: 27px 0 51px;
    font-size: 28px;
    font-weight: 500;
    line-height: 32px;
}
h2 b {
    font-family: 'Liberation Serif', serif;
    font-size: 30px;
}
h2 b + .mark {
    margin: 0 2px;
}
.body {
    font-size: 18px;
    font-weight: 300;
    line-height: 24px;
}
.body p {
    height: 24px;
}
.body .full {
    text-align-last: justify;
}
.body .mark {
    margin-left: 4px;
}
.callout {
    position: absolute;
    left: 103px;
    top: 167px;
    width: 733px;
    height: 114px;
    border: 3px solid #fa3838;
}
.scrollbar {
    display: flex;
    flex-direction: column;
    align-items: center;
    width: 17px;
    fill: #b3bcd2;
}
.ruler-toggle {
    width: 10px;
    height: 12px;
    margin: 5px 0;
}
.track {
    flex: 1;
    display: flex;
    flex-direction: column;
    align-items: center;
    width: 17px;
    padding: 9px 0 10px;
    background-color: #e8e9ef;
}
.thumb {
    width: 15px;
    height: 49px;
    margin-top: 12px;
    border-radius: 8px;
    background-color: #d4d7df;
}
.pager {
    width: 10px;
    height: 56px;
    margin-top: auto;
    fill: #8c99b5;
}
.sidebar {
    display: flex;
    flex-direction: column;
    align-items: center;
    width: 56px;
    padding-right: 3px;
    border-left: 2px solid #e2e4ec;
}
.grip {
    width: 25px;
    height: 5px;
    margin: 14px 0 12px;
    border: solid #cbcdd1;
    border-width: 1px 0;
}
.sidebar button {
    height: 45px;
}
.sidebar .last {
    width: 49px;
    height: 54px;
    margin-top: auto;
    padding-top: 8px;
    justify-content: center;
    border-top: 1px solid #dfe1e6;
}
.icon.dots {
    height: 6px;
}

/* Status bar */
.statusbar {
    display: flex;
    align-items: center;
    height: 35px;
    flex-shrink: 0;
    border-top: 1px solid #dfe1e6;
    background-color: #f6f7f9;
}
.cell {
    display: flex;
    align-items: center;
    height: 20px;
    padding: 0 5px 0 10px;
    border-right: 1px solid #dfe1e6;
    white-space: nowrap;
}
.cell .icon {
    margin-right: 3px;
}
.cell.two {
    gap: 15px;
}
.cell.lines {
    gap: 14px;
    padding: 0 13px;
}
.cell.check {
    padding: 0 7px;
}
.cell.check .caret {
    margin-left: 5px;
}
.cell.missing {
    border: none;
    padding-left: 15px;
}
.tq {
    display: flex;
    margin-right: 3px;
    font-family: 'Liberation Serif', serif;
    font-size: 21px;
    line-height: 16px;
}
.tq small {
    margin-top: 5px;
    font-family: 'Noto Sans', sans-serif;
    font-size: 15px;
}
.views {
    display: flex;
    align-items: center;
    margin-left: auto;
    padding-right: 11px;
}
.views button {
    justify-content: center;
    width: 32px;
    height: 30px;
}
.views .sep {
    height: 22px;
    margin: 0 12px 0 7px;
}
.views .on {
    width: 29px;
    border-radius: 2px;
    background-color: #d9dee5;
}
.views .percent {
    width: 62px;
    gap: 5px;
}
.views .minus {
    width: 13px;
    margin: 0 14px 0 7px;
    background: linear-gradient(#3c465c, #3c465c) center / 100% 3px no-repeat;
}
.views .plus {
    width: 12px;
    height: 12px;
    margin: 0 10px 0 4px;
}
.views input {
    appearance: none;
    width: 183px;
    height: 16px;
    background: linear-gradient(90deg, #3c465c 47%, #c9ccd4 47%) center / 100% 1px no-repeat;
}
.views input::-webkit-slider-thumb {
    appearance: none;
    width: 15px;
    height: 15px;
    border: 2px solid #6b7076;
    border-radius: 50%;
    background-color: #f0f1f3;
}

/* Overlays */
.gauge {
    position: absolute;
    right: 0;
    top: 405px;
    display: flex;
    align-items: flex-end;
    width: 11px;
    height: 64px;
    padding: 1px;
    border: 2px solid #787878;
    border-radius: 6px;
    background-color: #fff;
}
.gauge span {
    width: 5px;
    height: 33px;
    border-radius: 2px;
    background-color: #fd7a23;
}
.ime {
    position: absolute;
    right: 0;
    bottom: 111px;
    display: flex;
    align-items: center;
    gap: 10px;
    width: 160px;
    height: 32px;
    padding: 0 5px 0 15px;
    border: 1px solid #b5cce6;
    background-color: #fff;
    fill: #0a6cdc;
}
.ime svg {
    width: 20px;
    height: 20px;
    flex-shrink: 0;
}
.ime .ime-logo {
    position: absolute;
    left: -32px;
    top: -6px;
    width: 39px;
    height: 38px;
}
.zh {
    font-size: 18px;
    font-weight: bold;
    color: #0a6cdc;
}
.watermark {
    position: absolute;
    right: 14px;
    bottom: 4px;
    font-size: 20px;
    font-weight: 300;
    line-height: 28px;
    color: rgba(90, 90, 90, 0.75);
}
```
